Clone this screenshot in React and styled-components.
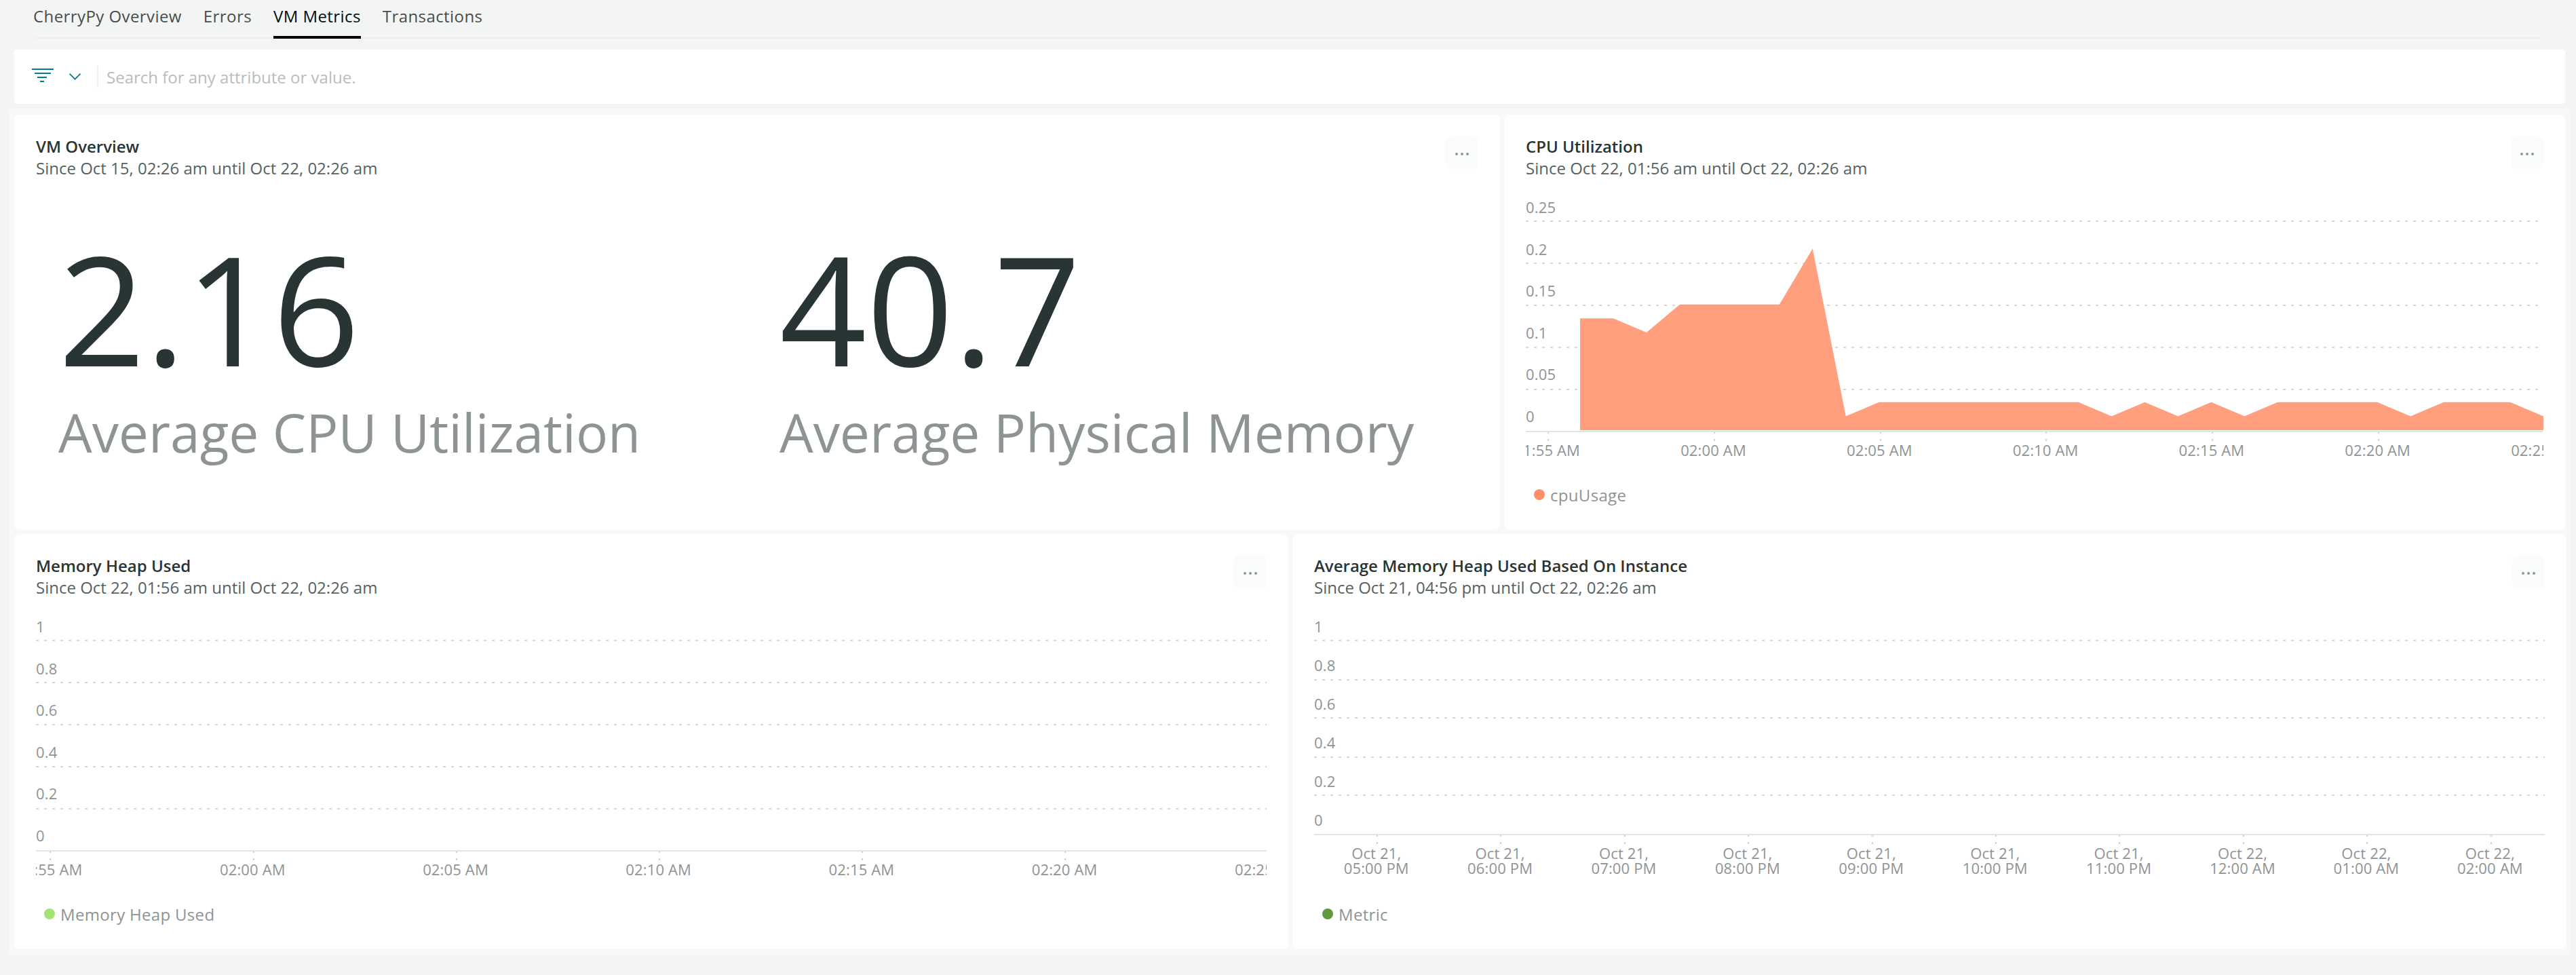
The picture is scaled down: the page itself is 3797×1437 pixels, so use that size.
import React from "react";
import styled, { createGlobalStyle } from "styled-components";

const GlobalStyle = createGlobalStyle`
  html, body { margin: 0; background: #f3f4f4; }
  body { font-family: "Open Sans", sans-serif; font-size: 24px; line-height: 31px; color: #293434; }
  * { box-sizing: border-box; }
`;

const Page = styled.div`
  display: flex;
  flex-direction: column;
  min-height: 1437px;
  background: #f3f4f4;
`;

const Nav = styled.nav`
  display: flex;
  gap: 32px;
  height: 57px;
  margin: 0 48px 0 49px;
  box-shadow: inset 0 -2px 0 #edeeee;
`;

const Tab = styled.a`
  height: 57px;
  padding-top: 8px;
  letter-spacing: 0.42px;
  white-space: nowrap;
  color: ${(p) => (p.$active ? "#000e0e" : "#464e4e")};
  border-bottom: 4px solid ${(p) => (p.$active ? "#000" : "transparent")};
`;

const SearchBar = styled.div`
  display: flex;
  align-items: center;
  height: 80px;
  margin: 16px 16px 8px 21px;
  padding-left: 26px;
  background: #fff;
  border-radius: 4px;
`;

const FilterControl = styled.div`
  display: flex;
  align-items: center;
  gap: 22px;
  height: 32px;
  width: 98px;
  border-right: 2px solid #edeeee;
`;

const Placeholder = styled.span`
  margin: 1px 0 0 12px;
  color: #b9bdbd;
`;

const Dashboard = styled.main`
  display: flex;
  flex-direction: column;
  gap: 6px;
  margin: 0 8px 0 13px;
  padding: 8px 6px 8px 8px;
  background: #f7f9f9;
`;

const Row = styled.div`
  display: flex;
  gap: 6px;
`;

const Card = styled.section`
  width: ${(p) => p.$width}px;
  height: 612px;
  padding: 31px 32px 0;
  background: #fff;
  border-radius: 8px;
`;

const CardHeader = styled.header`
  display: flex;
  justify-content: space-between;
  height: 73px;
`;

const Title = styled.h2`
  margin: 0 0 1px;
  font-size: 24px;
  font-weight: 600;
  line-height: 31px;
`;

const Subtitle = styled.div`
  color: #556262;
`;

const MenuButton = styled.button`
  display: flex;
  align-items: center;
  justify-content: center;
  gap: 4px;
  width: 48px;
  height: 48px;
  margin: 1px 0 0;
  padding: 3px 0 0;
  border: 0;
  border-radius: 8px;
  background: #fafcfb;
`;

const MenuDot = styled.span`
  width: 4px;
  height: 4px;
  border-radius: 50%;
  background: #8e9494;
`;

const Stats = styled.div`
  display: grid;
  grid-template-columns: 1fr 1fr;
`;

const Stat = styled.div`
  padding-left: 33px;
`;

const StatValue = styled.div`
  height: 300px;
  padding-top: 30px;
  font-size: 224.5px;
  line-height: 300px;
`;

const StatLabel = styled.div`
  padding-top: 13.5px;
  font-size: 78.5px;
  line-height: 100px;
  white-space: nowrap;
  color: #8e9494;
`;

const Plot = styled.svg`
  display: block;
  overflow: hidden;
`;

const AxisText = styled.text`
  font-family: "Open Sans", sans-serif;
  font-size: 22px;
  letter-spacing: 0.15px;
  fill: #8e9494;
`;

const Legend = styled.div`
  display: flex;
  align-items: flex-start;
  gap: 8px;
  margin-top: 25px;
  padding-left: 12px;
  letter-spacing: 0.32px;
  color: #8e9494;
`;

const LegendDot = styled.span`
  width: 16px;
  height: 16px;
  margin-top: 7px;
  border-radius: 50%;
  background: ${(p) => p.$color};
`;

function FilterIcon() {
  return (
    <svg width="32" height="24" shapeRendering="crispEdges" fill="#007e8a">
      <rect x="0" y="0" width="32" height="2" />
      <rect x="4" y="6" width="24" height="2" />
      <rect x="8" y="12" width="14" height="2" />
      <rect x="12" y="18" width="6" height="2" />
    </svg>
  );
}

function ChevronIcon() {
  return (
    <svg width="20" height="12" fill="none" stroke="#007e8a" strokeWidth="1.7">
      <path d="M1.5 1.7 L9.5 9.7 L17.5 1.7" />
    </svg>
  );
}

function Header({ title, subtitle }) {
  return (
    <CardHeader>
      <div>
        <Title>{title}</Title>
        <Subtitle>{subtitle}</Subtitle>
      </div>
      <MenuButton aria-label="More">
        <MenuDot />
        <MenuDot />
        <MenuDot />
      </MenuButton>
    </CardHeader>
  );
}

function Chart({ width, yLabels, lines, labelStep, ticks, area }) {
  const axis = lines[lines.length - 1];
  return (
    <Plot width={width} height="416">
      {lines.slice(0, -1).map((y) => (
        <line key={y} x1="0" x2={width} y1={y} y2={y} stroke="#d5d7d7" strokeWidth="2" strokeDasharray="4 8" />
      ))}
      {area && <polygon points={area} fill="#ff9570" fillOpacity="0.9" />}
      <rect x="0" y={axis - 1} width={width} height="2" fill="#e3e4e4" />
      {yLabels.map((label, i) => (
        <AxisText key={label} x="0" y={Math.round(41 + i * labelStep)}>
          {label}
        </AxisText>
      ))}
      {ticks.map(({ x, text }) => (
        <g key={x}>
          <rect x={Math.round(x) - 1} y={axis + 1} width="2" height="2" fill="#cfd2d2" />
          <rect x={Math.round(x) - 1} y={axis + 11} width="2" height="3" fill="#cfd2d2" />
          {text.map((part, i) => (
            <AxisText key={part} x={x - 1.3} y={axis + 36 + i * 22} textAnchor="middle">
              {part}
            </AxisText>
          ))}
        </g>
      ))}
    </Plot>
  );
}

const wideLines = [53, 115, 177, 239, 301, 363];
const tallLabelLines = [53, 111, 167, 225, 281, 339];
const unitLabels = ["1", "0.8", "0.6", "0.4", "0.2", "0"];
const minutes = ["01:55 AM", "02:00 AM", "02:05 AM", "02:10 AM", "02:15 AM", "02:20 AM", "02:25 AM"];

const cpuTicks = minutes.map((m, i) => ({ x: 33 + i * 244.8, text: [m] }));
const heapTicks = minutes.map((m, i) => ({ x: 21.4 + i * 299.2, text: [m] }));

const hours = ["05:00 PM", "06:00 PM", "07:00 PM", "08:00 PM", "09:00 PM", "10:00 PM", "11:00 PM", "12:00 AM", "01:00 AM", "02:00 AM"];
const instanceTicks = hours.map((h, i) => ({
  x: 93 + i * 182.4,
  text: [i < 7 ? "Oct 21," : "Oct 22,", h],
}));

// CPU samples, one per minute, in sixtieths of a core
const samples = [8, 8, 7, 9, 9, 9, 9, 13, 1, 2, 2, 2, 2, 2, 2, 2, 1, 2, 1, 2, 1, 2, 2, 2, 2, 1, 2, 2, 2, 1];
const cpuArea = [
  "80,361",
  ...samples.map((v, i) => `${80 + (i * 1420) / 29},${361 - v * 20.58}`),
  "1500,361",
].join(" ");

export default function App() {
  return (
    <>
      <GlobalStyle />
      <Page>
        <Nav>
          <Tab>CherryPy Overview</Tab>
          <Tab>Errors</Tab>
          <Tab $active>VM Metrics</Tab>
          <Tab>Transactions</Tab>
        </Nav>
        <SearchBar>
          <FilterControl>
            <FilterIcon />
            <ChevronIcon />
          </FilterControl>
          <Placeholder>Search for any attribute or value.</Placeholder>
        </SearchBar>
        <Dashboard>
          <Row>
            <Card $width={2190}>
              <Header title="VM Overview" subtitle="Since Oct 15, 02:26 am until Oct 22, 02:26 am" />
              <Stats>
                <Stat>
                  <StatValue>2.16</StatValue>
                  <StatLabel>Average CPU Utilization</StatLabel>
                </Stat>
                <Stat>
                  <StatValue>40.7</StatValue>
                  <StatLabel>Average Physical Memory</StatLabel>
                </Stat>
              </Stats>
            </Card>
            <Card $width={1564}>
              <Header title="CPU Utilization" subtitle="Since Oct 22, 01:56 am until Oct 22, 02:26 am" />
              <Chart
                width={1500}
                yLabels={["0.25", "0.2", "0.15", "0.1", "0.05", "0"]}
                lines={wideLines}
                labelStep={61.6}
                ticks={cpuTicks}
                area={cpuArea}
              />
              <Legend>
                <LegendDot $color="#ff8f6b" />
                cpuUsage
              </Legend>
            </Card>
          </Row>
          <Row>
            <Card $width={1878}>
              <Header title="Memory Heap Used" subtitle="Since Oct 22, 01:56 am until Oct 22, 02:26 am" />
              <Chart width={1814} yLabels={unitLabels} lines={wideLines} labelStep={61.6} ticks={heapTicks} />
              <Legend>
                <LegendDot $color="#a3e476" />
                Memory Heap Used
              </Legend>
            </Card>
            <Card $width={1878}>
              <Header
                title="Average Memory Heap Used Based On Instance"
                subtitle="Since Oct 21, 04:56 pm until Oct 22, 02:26 am"
              />
              <Chart width={1814} yLabels={unitLabels} lines={tallLabelLines} labelStep={56.9} ticks={instanceTicks} />
              <Legend>
                <LegendDot $color="#63993d" />
                Metric
              </Legend>
            </Card>
          </Row>
        </Dashboard>
      </Page>
    </>
  );
}
